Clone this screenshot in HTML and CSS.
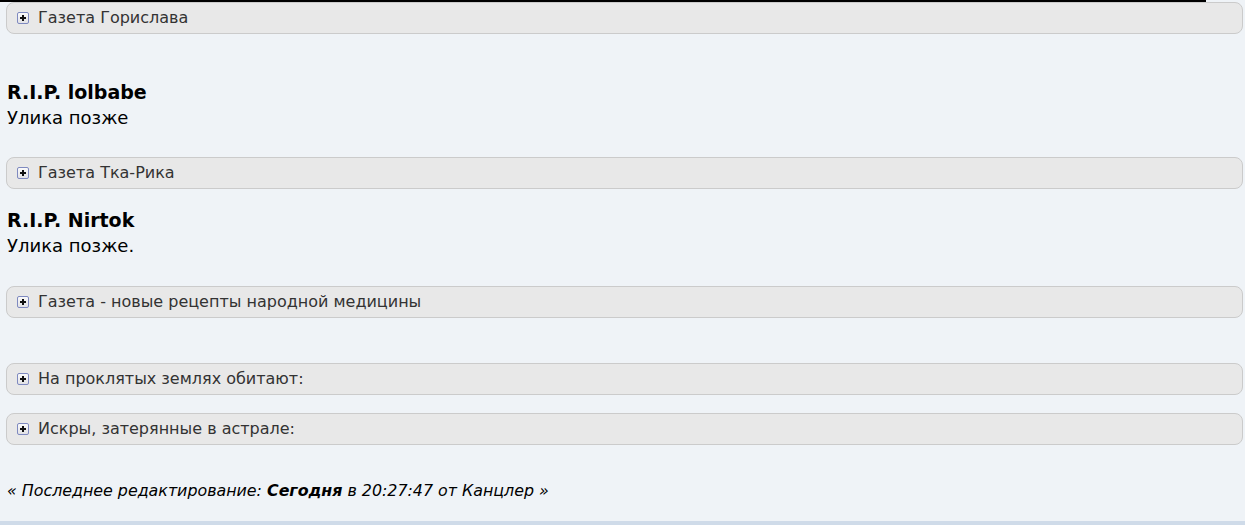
FILE: index.html
```html
<!DOCTYPE html>
<html lang="ru">
<head>
    <meta charset="UTF-8">
    <title>Пост</title>
    <link rel="stylesheet" href="styles.css">
</head>
<body>
<div id="topline"></div>
<div id="post">
    <div class="spoiler"><span class="plus"></span>Газета Горислава</div>
    <div class="note gap-big">
        <div class="rip">R.I.P. lolbabe</div>
        <div>Улика позже</div>
    </div>
    <div class="spoiler"><span class="plus"></span>Газета Тка-Рика</div>
    <div class="note gap-small">
        <div class="rip">R.I.P. Nirtok</div>
        <div>Улика позже.</div>
    </div>
    <div class="spoiler"><span class="plus"></span>Газета - новые рецепты народной медицины</div>
    <div class="spoiler spaced"><span class="plus"></span>На проклятых землях обитают:</div>
    <div class="spoiler near"><span class="plus"></span>Искры, затерянные в астрале:</div>
    <div id="edited">
        « Последнее редактирование: <b>Сегодня</b> в 20:27:47 от Канцлер »
    </div>
</div>
<div id="bottomline"></div>
</body>
</html>
```

FILE: styles.css
```css
html, body{
    margin: 0;
    padding: 0;
    background: #eff3f7;
    font-family: "DejaVu Sans", Verdana, sans-serif;
    color: #000;
}
#topline{
    width: 1206px;
    height: 2px;
    background: #000;
}
#post{
    padding: 0 2px 0 6px;
    height: 519px;
    box-sizing: border-box;
}
.spoiler{
    height: 30px;
    line-height: 30px;
    background: #e8e8e8;
    border: 1px solid #cbcbcb;
    border-radius: 8px;
    padding-left: 10px;
    font-size: 16px;
    color: #333;
    display: flex;
    align-items: center;
}
.plus{
    width: 10px;
    height: 10px;
    border: 1px solid #7f8ac0;
    border-radius: 2px;
    background: linear-gradient(#fafafa, #e2e2e6);
    margin-right: 9px;
    position: relative;
}
.plus:before, .plus:after{
    content: "";
    position: absolute;
    background: #111;
}
.plus:before{
    left: 2px;
    top: 4px;
    width: 6px;
    height: 2px;
}
.plus:after{
    left: 4px;
    top: 2px;
    width: 2px;
    height: 6px;
}
.note{
    font-size: 18px;
    line-height: 26px;
    padding-left: 1px;
    margin-bottom: 26px;
}
.rip{
    font-size: 19px;
    font-weight: bold;
}
.gap-big{
    margin-top: 45px;
}
.gap-small{
    margin-top: 18px;
    margin-bottom: 27px;
}
.spaced{
    margin-top: 45px;
}
.near{
    margin-top: 18px;
}
#edited{
    margin-top: 36px;
    padding-left: 1px;
    font-size: 15.85px;
    line-height: 20px;
    font-style: italic;
}
#bottomline{
    height: 6px;
    background: #cfdbe9;
}
```
